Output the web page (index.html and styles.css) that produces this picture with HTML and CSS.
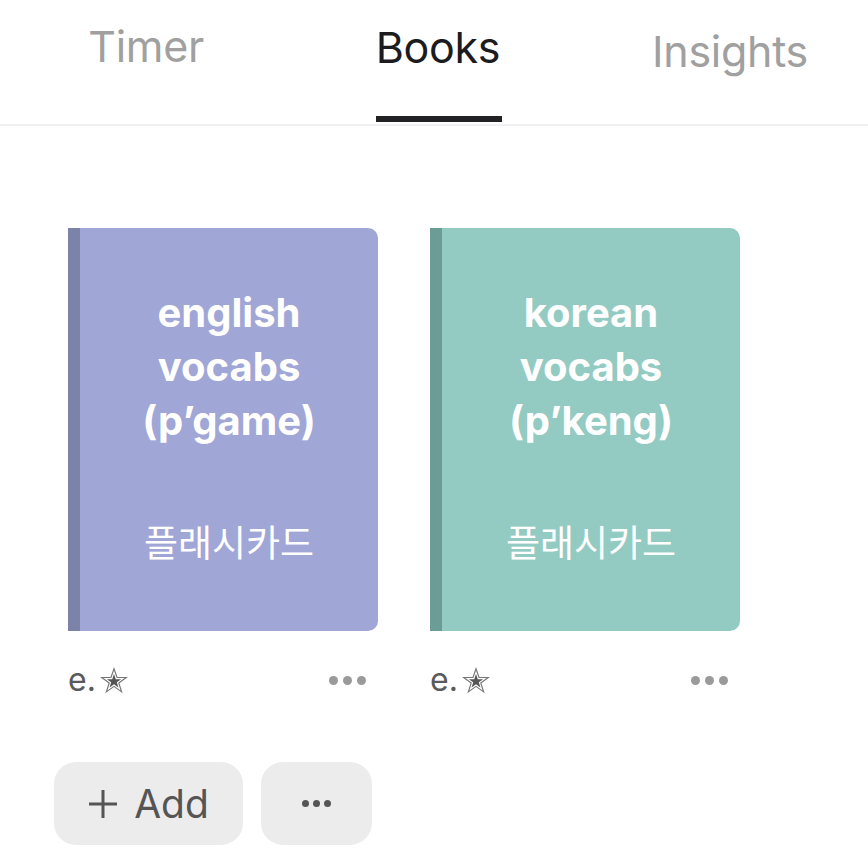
FILE: index.html
```html
<!DOCTYPE html>
<html lang="ko">
<head>
<meta charset="utf-8">
<link rel="stylesheet" href="styles.css">
</head>
<body>
<nav class="tabs">
  <div class="tab tab-timer">Timer</div>
  <div class="tab tab-books active">Books<span class="underline"></span></div>
  <div class="tab tab-insights">Insights</div>
</nav>
<main class="shelf">
  <div class="books">
    <div class="book">
      <div class="cover purple">
        <div class="spine"></div>
        <div class="cover-body">
          <div class="title">english<br>vocabs<br>(p’game)</div>
          <div class="kind">플래시카드</div>
        </div>
      </div>
      <div class="meta">
        <span class="owner">e.<svg class="star" viewBox="0 0 24 24" width="28" height="28"><polygon points="12,1.5 14.6,9 22.5,9 16.1,13.7 18.5,21.3 12,16.6 5.5,21.3 7.9,13.7 1.5,9 9.4,9" fill="#fff" stroke="#777" stroke-width="1" stroke-linejoin="miter"/><polygon points="12,6 13.5,10.4 18.1,10.4 14.4,13.1 15.8,17.5 12,14.8 8.2,17.5 9.6,13.1 5.9,10.4 10.5,10.4" fill="#555"/></svg></span>
        <span class="dots"><i></i><i></i><i></i></span>
      </div>
    </div>
    <div class="book">
      <div class="cover teal">
        <div class="spine"></div>
        <div class="cover-body">
          <div class="title">korean<br>vocabs<br>(p’keng)</div>
          <div class="kind">플래시카드</div>
        </div>
      </div>
      <div class="meta">
        <span class="owner">e.<svg class="star" viewBox="0 0 24 24" width="28" height="28"><polygon points="12,1.5 14.6,9 22.5,9 16.1,13.7 18.5,21.3 12,16.6 5.5,21.3 7.9,13.7 1.5,9 9.4,9" fill="#fff" stroke="#777" stroke-width="1" stroke-linejoin="miter"/><polygon points="12,6 13.5,10.4 18.1,10.4 14.4,13.1 15.8,17.5 12,14.8 8.2,17.5 9.6,13.1 5.9,10.4 10.5,10.4" fill="#555"/></svg></span>
        <span class="dots"><i></i><i></i><i></i></span>
      </div>
    </div>
  </div>
  <div class="actions">
    <button class="btn btn-add"><svg class="plus" viewBox="0 0 30 30" width="30" height="30"><path d="M15 1 V29 M1 15 H29" stroke="#555" stroke-width="3" fill="none"/></svg><span>Add</span></button>
    <button class="btn btn-more"><span class="dots dark"><i></i><i></i><i></i></span></button>
  </div>
</main>
</body>
</html>
```
FILE: styles.css
```css
* { box-sizing: border-box; }
html, body {
  margin: 0;
  padding: 0;
  background: #ffffff;
  font-family: Inter, "Noto Sans CJK KR", sans-serif;
}
.tabs {
  display: grid;
  grid-template-columns: 292px 292px 292px;
  height: 126px;
  border-bottom: 2px solid #f0f0f4;
}
.tab {
  position: relative;
  text-align: center;
  font-size: 43px;
  font-weight: 400;
  color: #a0a0a0;
  line-height: 52px;
  letter-spacing: -0.3px;
}
.tab-timer { padding-top: 20px; }
.tab-books { padding-top: 21px; color: #1c1c1e; }
.tab-insights { padding-top: 25px; }
.underline {
  position: absolute;
  left: 84px;
  width: 126px;
  top: 116px;
  height: 6px;
  background: #222224;
}
.shelf {
  padding: 102px 0 0 54px;
}
.books {
  display: flex;
  gap: 52px;
  padding-left: 14px;
}
.book {
  width: 310px;
}
.cover {
  display: flex;
  height: 403px;
  border-radius: 0 10px 10px 0;
  overflow: hidden;
}
.cover.purple { background: #a0a6d6; }
.cover.purple .spine { background: #7c83a8; }
.cover.teal { background: #93cbc3; }
.cover.teal .spine { background: #6b9c96; }
.spine {
  width: 12px;
  flex: none;
}
.cover-body {
  flex: 1;
  display: flex;
  flex-direction: column;
  align-items: center;
  color: #ffffff;
  text-align: center;
  padding-top: 58px;
}
.title {
  font-size: 40px;
  font-weight: 700;
  line-height: 54px;
}
.kind {
  margin-top: 68px;
  font-size: 37px;
  font-weight: 400;
  line-height: 50px;
  font-family: "Noto Sans CJK KR", sans-serif;
}
.meta {
  display: flex;
  justify-content: space-between;
  align-items: center;
  margin-top: 32px;
  height: 34px;
}
.owner {
  display: flex;
  align-items: center;
  font-size: 32px;
  color: #5a5a5a;
  line-height: 34px;
}
.star {
  margin-left: 4px;
  margin-top: 2px;
}
.dots {
  display: flex;
  gap: 5px;
  margin-right: 12px;
}
.dots i {
  width: 9px;
  height: 9px;
  border-radius: 50%;
  background: #9a9a9a;
}
.dots.dark { margin-right: 0; gap: 4px; }
.dots.dark i { width: 7px; height: 7px; background: #555; }
.actions {
  display: flex;
  gap: 18px;
  margin-top: 65px;
}
.btn {
  height: 83px;
  border: none;
  border-radius: 22px;
  background: #ececec;
  font-family: Inter, sans-serif;
  font-size: 39px;
  color: #555555;
  display: flex;
  align-items: center;
  justify-content: center;
  padding: 0;
}
.btn-add { width: 189px; gap: 16px; }
.btn-more { width: 111px; }
```
